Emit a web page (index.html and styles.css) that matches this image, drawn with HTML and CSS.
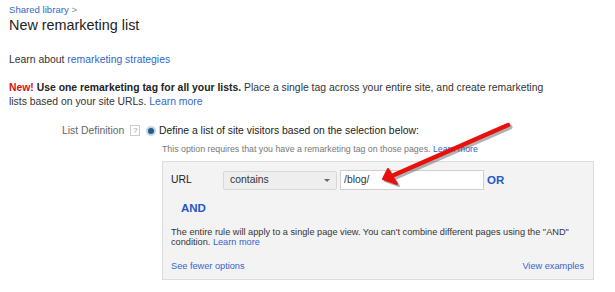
FILE: index.html
```html
<!DOCTYPE html>
<html>
  <head>
    <meta charset="utf-8">
    <title>New remarketing list</title>
    <link rel="stylesheet" href="styles.css">
  </head>
  <body>
    <div class="page">
      <div class="crumb"><a href="#">Shared library</a> &gt;</div>
      <h1 class="title">New remarketing list</h1>

      <p class="learn">Learn about <a href="#">remarketing strategies</a></p>

      <p class="notice"><span class="new">New!</span> <b>Use one remarketing tag for all your lists.</b> Place a single tag across your entire site, and create remarketing<br>lists based on your site URLs. <a href="#">Learn more</a></p>

      <div class="field">
        <div class="field-label">List Definition <span class="help">?</span></div>
        <div class="field-body">
          <div class="option"><span class="radio"></span>Define a list of site visitors based on the selection below:</div>
          <div class="hint">This option requires that you have a remarketing tag on those pages. <a href="#">Learn more</a></div>

          <div class="rules">
            <div class="rule-row">
              <span class="rule-name">URL</span>
              <div class="select">contains <span class="caret"></span></div>
              <div class="text-input">/blog/</div>
              <span class="op">OR</span>
            </div>
            <div class="and">AND</div>
            <p class="rule-note">The entire rule will apply to a single page view. You can't combine different pages using the "AND"<br>condition. <a href="#">Learn more</a></p>
            <div class="rule-links">
              <a href="#">See fewer options</a>
              <a href="#">View examples</a>
            </div>
          </div>
        </div>
      </div>
    </div>

    <!-- annotation arrow drawn over the screenshot -->
    <svg class="arrow" width="615" height="292" viewBox="0 0 615 292">
      <g transform="translate(2,2)" fill="#555" stroke="#555" opacity="0.45">
        <line x1="508" y1="125" x2="394" y2="175" stroke-width="5" stroke-linecap="round"/>
        <polygon points="383,179 388,169 397,184" stroke-width="2" stroke-linejoin="round"/>
      </g>
      <g fill="#e8100c" stroke="#e8100c">
        <line x1="508" y1="125" x2="394" y2="175" stroke-width="4.5" stroke-linecap="round"/>
        <polygon points="383,179 388,169 397,184" stroke-width="2" stroke-linejoin="round"/>
      </g>
    </svg>
  </body>
</html>
```

FILE: styles.css
```css
html, body {
margin: 0;
padding: 0;
background: #fff;
}

body {
font-family: "Liberation Sans", Arial, sans-serif;
font-size: 10.4px;
line-height: 14px;
color: #333;
}

a {
color: #3366cc;
text-decoration: none;
}

.page {
padding: 3px 9px 0 9px;
}

.crumb {
font-size: 9.6px;
line-height: 13px;
color: #888;
}

.title {
font-size: 14.4px;
font-weight: normal;
color: #222;
margin: 0;
line-height: 18px;
}

.learn {
margin: 19px 0 0 0;
}

.notice {
margin: 14px 0 0 0;
}

.new {
color: #dd1111;
font-weight: bold;
}

.notice b {
color: #222;
}

.field {
display: flex;
margin-top: 15px;
padding-left: 53px;
}

.field-label {
width: 84px;
color: #666;
line-height: 14px;
}

.help {
display: inline-block;
width: 8px;
height: 9px;
line-height: 9px;
border: 1px solid #ccc;
font-size: 8px;
text-align: center;
color: #999;
margin-left: 3px;
vertical-align: 1px;
}

.field-body {
flex: 1;
}

.option {
display: flex;
align-items: center;
color: #222;
}

.radio {
width: 6px;
height: 6px;
border-radius: 50%;
background: #1e5d8e;
border: 2px solid #c8d3dc;
margin-right: 3px;
}

.hint {
font-size: 8.8px;
color: #777;
margin: 5px 0 0 16px;
line-height: 12px;
}

.rules {
margin: 6px 0 0 16px;
width: 413px;
background: #f3f3f3;
border: 1px solid #dcdcdc;
padding: 8px 9px 6px 8px;
}

.rule-row {
display: flex;
align-items: center;
}

.rule-name {
width: 52px;
color: #222;
}

.select {
display: flex;
align-items: center;
justify-content: space-between;
width: 100px;
height: 17px;
padding: 0 6px;
border: 1px solid #d8d8d8;
border-radius: 2px;
background: #eeeeee;
color: #333;
}

.caret {
width: 0;
height: 0;
border-left: 3px solid transparent;
border-right: 3px solid transparent;
border-top: 3px solid #666;
}

.text-input {
width: 136px;
height: 18px;
line-height: 18px;
margin-left: 3px;
padding: 0 3px;
border: 1px solid #cfcfcf;
background: #fff;
color: #333;
}

.op {
margin-left: 3px;
color: #2458c8;
font-weight: bold;
font-size: 11.5px;
}

.and {
color: #2458c8;
font-weight: bold;
font-size: 11.5px;
margin: 11px 0 0 10px;
}

.rule-note {
margin: 12px 0 0 0;
font-size: 9.2px;
line-height: 10px;
color: #333;
}

.rule-links {
display: flex;
justify-content: space-between;
margin-top: 12px;
font-size: 9.2px;
}

.arrow {
position: absolute;
left: 0;
top: 0;
pointer-events: none;
}
```
